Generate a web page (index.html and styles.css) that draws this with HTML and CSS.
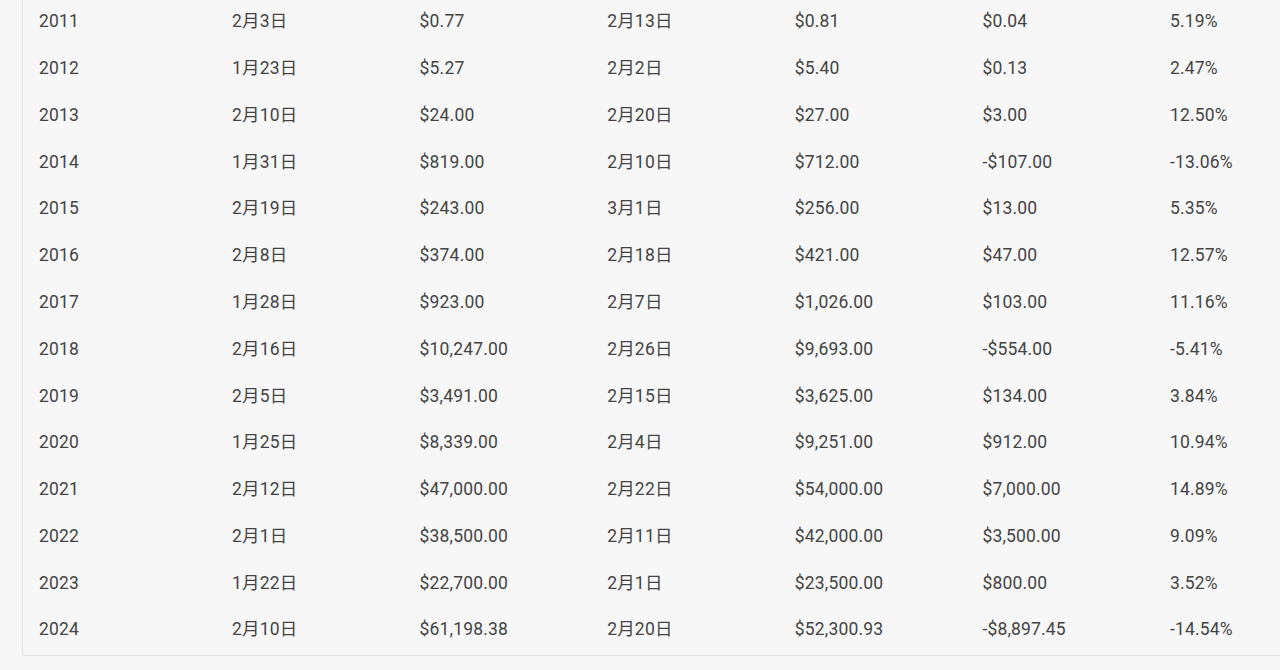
FILE: index.html
```html
<!DOCTYPE html>
<html lang="zh">
<head>
<meta charset="utf-8">
<link rel="stylesheet" href="styles.css">
</head>
<body>
<div class="page">
  <div class="card">
    <table class="data">
      <colgroup>
        <col class="c-first"><col class="c"><col class="c"><col class="c"><col class="c"><col class="c"><col class="c">
      </colgroup>
      <tbody>
        <tr><td>2011</td><td>2月3日</td><td>$0.77</td><td>2月13日</td><td>$0.81</td><td>$0.04</td><td>5.19%</td></tr>
        <tr><td>2012</td><td>1月23日</td><td>$5.27</td><td>2月2日</td><td>$5.40</td><td>$0.13</td><td>2.47%</td></tr>
        <tr><td>2013</td><td>2月10日</td><td>$24.00</td><td>2月20日</td><td>$27.00</td><td>$3.00</td><td>12.50%</td></tr>
        <tr><td>2014</td><td>1月31日</td><td>$819.00</td><td>2月10日</td><td>$712.00</td><td>-$107.00</td><td>-13.06%</td></tr>
        <tr><td>2015</td><td>2月19日</td><td>$243.00</td><td>3月1日</td><td>$256.00</td><td>$13.00</td><td>5.35%</td></tr>
        <tr><td>2016</td><td>2月8日</td><td>$374.00</td><td>2月18日</td><td>$421.00</td><td>$47.00</td><td>12.57%</td></tr>
        <tr><td>2017</td><td>1月28日</td><td>$923.00</td><td>2月7日</td><td>$1,026.00</td><td>$103.00</td><td>11.16%</td></tr>
        <tr><td>2018</td><td>2月16日</td><td>$10,247.00</td><td>2月26日</td><td>$9,693.00</td><td>-$554.00</td><td>-5.41%</td></tr>
        <tr><td>2019</td><td>2月5日</td><td>$3,491.00</td><td>2月15日</td><td>$3,625.00</td><td>$134.00</td><td>3.84%</td></tr>
        <tr><td>2020</td><td>1月25日</td><td>$8,339.00</td><td>2月4日</td><td>$9,251.00</td><td>$912.00</td><td>10.94%</td></tr>
        <tr><td>2021</td><td>2月12日</td><td>$47,000.00</td><td>2月22日</td><td>$54,000.00</td><td>$7,000.00</td><td>14.89%</td></tr>
        <tr><td>2022</td><td>2月1日</td><td>$38,500.00</td><td>2月11日</td><td>$42,000.00</td><td>$3,500.00</td><td>9.09%</td></tr>
        <tr><td>2023</td><td>1月22日</td><td>$22,700.00</td><td>2月1日</td><td>$23,500.00</td><td>$800.00</td><td>3.52%</td></tr>
        <tr><td>2024</td><td>2月10日</td><td>$61,198.38</td><td>2月20日</td><td>$52,300.93</td><td>-$8,897.45</td><td>-14.54%</td></tr>
      </tbody>
    </table>
  </div>
</div>
</body>
</html>
```
FILE: styles.css
```css
html, body {
  margin: 0;
  padding: 0;
  background: #f7f7f7;
  overflow: hidden;
  height: 670px;
}
.page {
  padding-left: 22px;
  width: 1400px;
}
.card {
  margin-top: -2px;
  width: 1340px;
  background: #f7f7f7;
  border-left: 1px solid #e2e2e2;
  border-bottom: 1px solid #e2e2e2;
  border-bottom-left-radius: 4px;
  padding-bottom: 2px;
}
.data {
  border-collapse: collapse;
  table-layout: fixed;
  width: 1318.6px;
  font-family: Roboto, "Noto Sans CJK JP", sans-serif;
  font-size: 17.5px;
  line-height: 20px;
  letter-spacing: 0.01em;
  color: #444444;
}
.c-first { width: 193px; }
.c { width: 187.6px; }
.data td {
  height: 46.77px;
  padding: 0 0 0 16px;
  vertical-align: middle;
  white-space: nowrap;
  box-sizing: border-box;
}
```
